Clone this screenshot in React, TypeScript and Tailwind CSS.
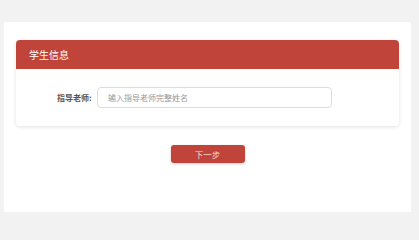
export default function App() {
  return (
    <div
      className="h-[240px] w-[419px] bg-[#f2f2f2] pt-[22px] pl-[4px]"
      style={{ fontFamily: '"Noto Sans CJK SC", "Noto Sans", sans-serif' }}
    >
      <div className="flex h-[190px] w-[407px] flex-col bg-white px-[12px] pt-[18px]">
        <div className="overflow-hidden rounded-[4px] bg-white shadow-[0_1px_4px_rgba(0,0,0,0.12)]">
          <div className="flex h-[29px] items-center bg-[#c0443a] pl-[13px] text-[10px] leading-none text-white">
            学生信息
          </div>
          <div className="flex h-[57px] items-center pl-[41px]">
            <span className="w-[40px] text-[8px] font-bold leading-none text-[#555]">指导老师:</span>
            <div className="flex h-[21px] w-[235px] items-center rounded-[4px] border border-[#dcdcdc] pl-[10px] text-[8px] leading-none text-[#999]">
              输入指导老师完整姓名
            </div>
          </div>
        </div>
        <div className="mt-[19px] flex justify-center">
          <button className="flex h-[18px] w-[74px] items-center justify-center rounded-[3px] bg-[#c0443a] text-[8.5px] leading-none text-[#f6dede] shadow-[0_1px_3px_rgba(0,0,0,0.2)]">
            下一步
          </button>
        </div>
      </div>
    </div>
  );
}
